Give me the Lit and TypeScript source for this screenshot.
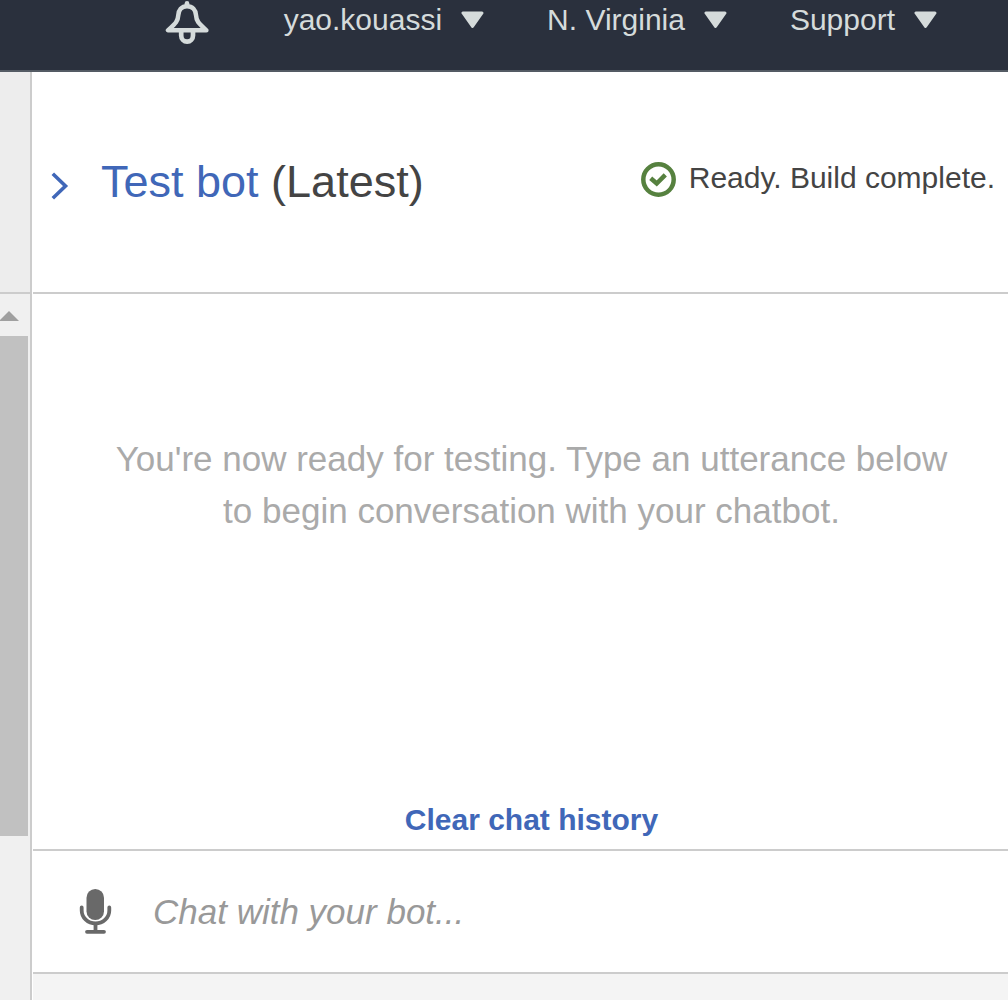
import { LitElement, html, css } from "lit";
import { customElement, property } from "lit/decorators.js";

const caret = html`<svg class="caret" viewBox="0 0 23 20" aria-hidden="true">
  <path d="M2 3h19L11.500 16.500z" fill="currentColor" stroke="currentColor" stroke-width="3" stroke-linejoin="round" />
</svg>`;

@customElement("console-nav")
export class ConsoleNav extends LitElement {
  @property({ attribute: false }) menus: string[] = [];

  static styles = css`
    :host {
      display: block;
    }
    .bar {
      display: flex;
      justify-content: flex-end;
      align-items: flex-start;
      gap: 63px;
      box-sizing: border-box;
      height: 72px;
      padding-right: 71px;
      background: #2a303d;
      border-bottom: 2px solid #545b64;
    }
    button {
      display: flex;
      align-items: center;
      gap: 19px;
      margin: 0;
      padding: 0;
      border: 0;
      background: none;
      color: #d5dbdb;
      font: 30px/40px "Liberation Sans", Arial, sans-serif;
      white-space: nowrap;
      cursor: pointer;
    }
    .bell {
      margin-right: 12px;
    }
    .bell svg {
      display: block;
      width: 44px;
      height: 45px;
    }
    .caret {
      width: 23px;
      height: 20px;
    }
  `;

  render() {
    return html`<nav class="bar" aria-label="Console">
      <button class="bell" aria-label="Notifications">
        <svg viewBox="0 0 44 45" fill="none" stroke="currentColor" aria-hidden="true">
          <path d="M22 3.200v2.500" stroke-width="4.600" stroke-linecap="round" />
          <path
            d="M22 6.200c-5.500 0-8.500 4-8.700 9-.3 6-2.600 8-10.300 15.100h38.400c-7.700-7.100-10.100-9.100-10.400-15.100C30.800 10.200 27.500 6.200 22 6.200z"
            stroke-width="4.500"
            stroke-linejoin="round"
          />
          <path d="M16.200 32v3.500a5.900 6.200 0 0 0 11.800 0V32" stroke-width="4.700" />
        </svg>
      </button>
      ${this.menus.map((name) => html`<button aria-haspopup="menu">${name}${caret}</button>`)}
    </nav>`;
  }
}

@customElement("scroll-gutter")
export class ScrollGutter extends LitElement {
  static styles = css`
    :host {
      display: flex;
      flex-direction: column;
      width: 30px;
      flex: none;
      background: #f0f0f0;
      border-right: 2px solid #ccc;
    }
    .top {
      height: 220px;
      background: #ededed;
      border-bottom: 2px solid #ccc;
    }
    .arrow {
      display: block;
      width: 19px;
      height: 10px;
      margin: 17px 0 15px;
      fill: #a0a0a0;
    }
    .thumb {
      width: 28px;
      height: 500px;
      background: #c1c1c1;
    }
  `;

  render() {
    return html`<div class="top"></div>
      <svg class="arrow" viewBox="0 0 19 10" aria-hidden="true"><path d="M9 0L19 10H-1z" /></svg>
      <div class="thumb"></div>`;
  }
}

@customElement("test-panel")
export class TestPanel extends LitElement {
  static styles = css`
    :host {
      display: flex;
      flex-direction: column;
      flex: 1;
      min-width: 0;
      margin-left: 1px;
      color: #444;
      background: #fff;
    }
    button {
      margin: 0;
      padding: 0;
      border: 0;
      background: none;
      color: #4067b8;
      cursor: pointer;
    }
    .head {
      display: flex;
      align-items: center;
      height: 220px;
      padding: 0 13px 0 18px;
      border-bottom: 2px solid #ccc;
    }
    .toggle svg {
      display: block;
      width: 18px;
      height: 28px;
      margin-top: 8px;
    }
    h1 {
      flex: 1;
      margin: 0 0 0 32px;
      font-size: 45px;
      line-height: 52px;
      font-weight: 400;
      white-space: nowrap;
    }
    h1 a {
      color: #4067b8;
      text-decoration: none;
    }
    .status {
      display: flex;
      align-items: center;
      gap: 12px;
      padding-bottom: 8px;
      font-size: 30px;
      line-height: 40px;
      white-space: nowrap;
    }
    .status svg {
      width: 36px;
      height: 36px;
      margin-top: 4px;
    }
    .talk {
      flex: 1;
      display: flex;
      flex-direction: column;
      align-items: center;
      justify-content: space-between;
      padding: 139px 0 9px 22px;
      border-bottom: 2px solid #ccc;
    }
    .talk p {
      margin: 0;
      padding: 0 50px;
      color: #aaa;
      font-size: 35px;
      line-height: 52px;
      text-align: center;
    }
    .clear {
      font: bold 30px/40px "Liberation Sans", Arial, sans-serif;
    }
    .entry {
      display: flex;
      align-items: center;
      gap: 41px;
      height: 121px;
      padding: 0 46px;
      border-bottom: 2px solid #ccc;
    }
    .mic svg {
      display: block;
      width: 33px;
      height: 46px;
    }
    input {
      flex: 1;
      min-width: 0;
      margin: 0;
      padding: 0;
      border: 0;
      outline: 0;
      background: none;
      color: #444;
      font: 35px/52px "Liberation Sans", Arial, sans-serif;
    }
    input::placeholder {
      color: #999;
      opacity: 1;
      font-style: italic;
    }
    .foot {
      height: 26px;
      background: #f4f4f4;
    }
  `;

  render() {
    return html`<header class="head">
        <button class="toggle" aria-label="Collapse panel">
          <svg viewBox="0 0 18 28" aria-hidden="true">
            <path d="M1.800 1.800L14.500 14 1.800 26.200" fill="none" stroke="currentColor" stroke-width="3.600" />
          </svg>
        </button>
        <h1><a href="#bot">Test bot</a> (Latest)</h1>
        <div class="status" role="status">
          <svg viewBox="0 0 36 36" fill="none" stroke="#56813f" aria-hidden="true">
            <circle cx="17.500" cy="17.500" r="15.200" stroke-width="4.500" />
            <path d="M9.700 16.200l6 5.300 8.600-8.700" stroke-width="4.500" />
          </svg>
          <span>Ready. Build complete.</span>
        </div>
      </header>
      <section class="talk">
        <p>You're now ready for testing. Type an utterance below to begin conversation with your chatbot.</p>
        <button class="clear">Clear chat history</button>
      </section>
      <div class="entry">
        <button class="mic" aria-label="Speak">
          <svg viewBox="0 0 33 46" aria-hidden="true">
            <rect x="7.500" y="0" width="17.500" height="31" rx="8.700" fill="#696969" />
            <path
              d="M2.700 18.500v3a13.800 13 0 0 0 27.600 0v-3M16.500 35v7M8 42.800h17"
              fill="none"
              stroke="#696969"
              stroke-width="3.800"
              stroke-linecap="round"
            />
          </svg>
        </button>
        <input type="text" aria-label="Chat with your bot" placeholder="Chat with your bot..." />
      </div>
      <div class="foot"></div>`;
  }
}

@customElement("app-root")
export class AppRoot extends LitElement {
  static styles = css`
    :host {
      display: flex;
      flex-direction: column;
      min-height: 100vh;
      background: #fff;
      font-family: "Liberation Sans", Arial, sans-serif;
    }
    .main {
      flex: 1;
      display: flex;
    }
  `;

  render() {
    return html`<console-nav .menus=${["yao.kouassi", "N. Virginia", "Support"]}></console-nav>
      <main class="main">
        <scroll-gutter></scroll-gutter>
        <test-panel></test-panel>
      </main>`;
  }
}
